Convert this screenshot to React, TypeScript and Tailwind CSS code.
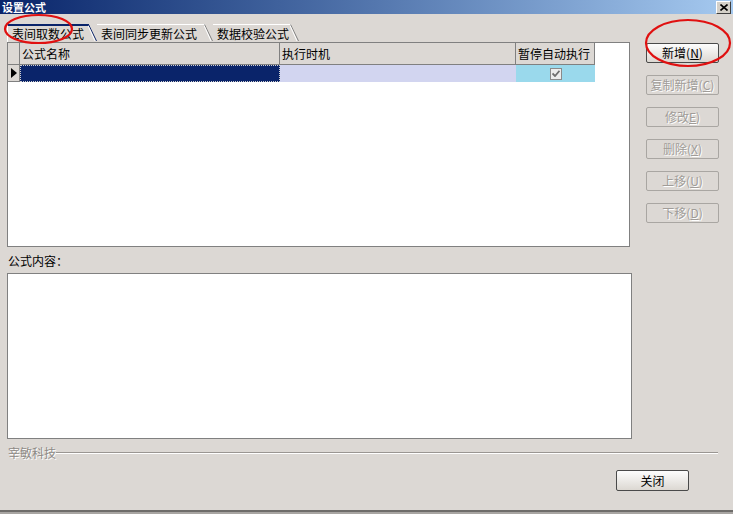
import React from 'react';

const FONT = '"Noto Sans CJK SC", "Liberation Sans", sans-serif';

interface BtnProps {
  label: string;
  hot: string;
  disabled?: boolean;
  noParen?: boolean;
}

const SideButton: React.FC<BtnProps> = ({ label, hot, disabled, noParen }) => (
  <div
    className={`h-[20px] w-[73px] flex items-center justify-center rounded-[2px] text-[12px] leading-none ${
      disabled
        ? 'border border-[#a9a6a2] text-[#a09c98] [text-shadow:1px_1px_0_#ffffff]'
        : 'border border-[#4a4a4a] bg-gradient-to-b from-[#fdfdfd] to-[#dcd8d2] text-black'
    }`}
  >
    {label}
    {noParen ? '' : '('}
    <u>{hot}</u>)
  </div>
);

const Tab: React.FC<{ label: string; active?: boolean; width: number }> = ({ label, active, width }) => (
  <div className="relative h-[18px] flex items-end" style={{ width }}>
    <div
      className={`h-full flex-1 flex items-center pl-[4px] text-[12px] leading-none text-black border-t ${
        active ? 'border-t-2 border-[#0a246a] border-l border-l-[#ffffff]' : 'border-[#ffffff]'
      }`}
    >
      {label}
    </div>
    <svg className="absolute right-[-8px] top-0" width="9" height="18" viewBox="0 0 9 18">
      <path d="M0.5 0.5 L8.5 17" stroke={active ? '#0a246a' : '#808080'} strokeWidth="1" fill="none" />
      <path d="M0 1.5 L7 17" stroke="#ffffff" strokeWidth="1" fill="none" />
    </svg>
  </div>
);

export default function App() {
  return (
    <div
      className="relative w-[733px] h-[514px] overflow-hidden bg-[#dcd8d4] flex flex-col"
      style={{ fontFamily: FONT }}
    >
      {/* title bar */}
      <div className="h-[14px] flex items-center justify-between bg-gradient-to-r from-[#0a246a] to-[#a6caf0]">
        <span className="pl-[2px] text-[11px] font-bold text-white leading-[13px]">设置公式</span>
        <div className="mr-[2px] w-[15px] h-[13px] bg-[#d4d0c8] border border-t-white border-l-white border-b-[#404040] border-r-[#404040] flex items-center justify-center">
          <svg width="8" height="7" viewBox="0 0 8 7">
            <path d="M0.5 0.5 L7.5 6.5 M7.5 0.5 L0.5 6.5" stroke="#000" strokeWidth="1.6" />
          </svg>
        </div>
      </div>

      <div className="flex flex-1">
        {/* left column */}
        <div className="ml-[7px] w-[625px] flex flex-col">
          <div className="mt-[10px] flex h-[18px]">
            <Tab label="表间取数公式" active width={82} />
            <div className="w-[8px]" />
            <Tab label="表间同步更新公式" width={108} />
            <div className="w-[8px]" />
            <Tab label="数据校验公式" width={78} />
          </div>

          {/* grid */}
          <div className="h-[205px] w-[623px] border border-[#808080] bg-white flex flex-col">
            <div className="flex h-[22px] text-[12px] leading-none">
              <div className="w-[12px] bg-[#dcd8d4] border-r border-b border-[#808080]" />
              <div className="w-[260px] bg-[#dcd8d4] border-r border-b border-[#808080] flex items-center pl-[2px]">公式名称</div>
              <div className="w-[236px] bg-[#dcd8d4] border-r border-b border-[#808080] flex items-center pl-[2px]">执行时机</div>
              <div className="w-[79px] bg-[#dcd8d4] border-r border-b border-[#808080] flex items-center pl-[2px]">暂停自动执行</div>
            </div>
            <div className="flex h-[17px]">
              <div className="w-[12px] bg-[#dcd8d4] border-r border-b border-[#808080] flex items-center justify-center">
                <svg width="6" height="10" viewBox="0 0 6 10">
                  <path d="M0 0 L6 5 L0 10 Z" fill="#000" />
                </svg>
              </div>
              <div className="w-[260px] bg-[#0a246a] border border-dotted border-[#d0d0d0]" />
              <div className="w-[236px] bg-[#d2d5f0]" />
              <div className="w-[79px] bg-[#9ad9ec] flex items-center justify-center">
                <div className="w-[12px] h-[12px] bg-[#ececec] border border-[#8a8a8a] flex items-center justify-center">
                  <svg width="8" height="7" viewBox="0 0 8 7">
                    <path d="M0.5 3.5 L3 6 L7.5 0.8" stroke="#6f6f6f" strokeWidth="1.8" fill="none" />
                  </svg>
                </div>
              </div>
            </div>
          </div>

          <div className="mt-[5px] h-[18px] pl-[1px] text-[12px] leading-none flex items-center">公式内容：</div>
          <div className="mt-[3px] h-[166px] w-[625px] border border-[#808080] bg-white" />
        </div>

        {/* right buttons */}
        <div className="ml-[14px] mt-[29px] flex flex-col gap-[12px]">
          <SideButton label="新增" hot="N" />
          <SideButton label="复制新增" hot="C" disabled />
          <SideButton label="修改" hot="E" disabled noParen />
          <SideButton label="删除" hot="X" disabled />
          <SideButton label="上移" hot="U" disabled />
          <SideButton label="下移" hot="D" disabled />
        </div>
      </div>

      {/* footer */}
      <div className="h-[72px] flex flex-col">
        <div className="mt-[5px] flex items-center pl-[8px] pr-[15px]">
          <span className="text-[12px] leading-none text-[#8e8a86] [text-shadow:1px_1px_0_#ffffff]">宰敏科技</span>
          <div className="flex-1 border-t border-[#9a9692] border-b border-b-white" />
        </div>
        <div className="mt-[11px] flex justify-end pr-[44px]">
          <div className="h-[21px] w-[73px] rounded-[2px] border border-[#4a4a4a] bg-gradient-to-b from-[#fdfdfd] to-[#dcd8d2] text-[12px] leading-none flex items-center justify-center">
            关闭
          </div>
        </div>
        <div className="mt-auto h-[4px] border-t-2 border-[#6e6c6a] bg-[#a8a5a2]" />
      </div>

      {/* red annotation marks */}
      <svg className="absolute left-0 top-0 pointer-events-none" width="733" height="514">
        <ellipse cx="38.5" cy="29" rx="33.5" ry="14" stroke="#e01010" strokeWidth="2.2" fill="none" />
        <ellipse cx="688" cy="43" rx="42" ry="23" stroke="#e01010" strokeWidth="2.2" fill="none" />
      </svg>
    </div>
  );
}
